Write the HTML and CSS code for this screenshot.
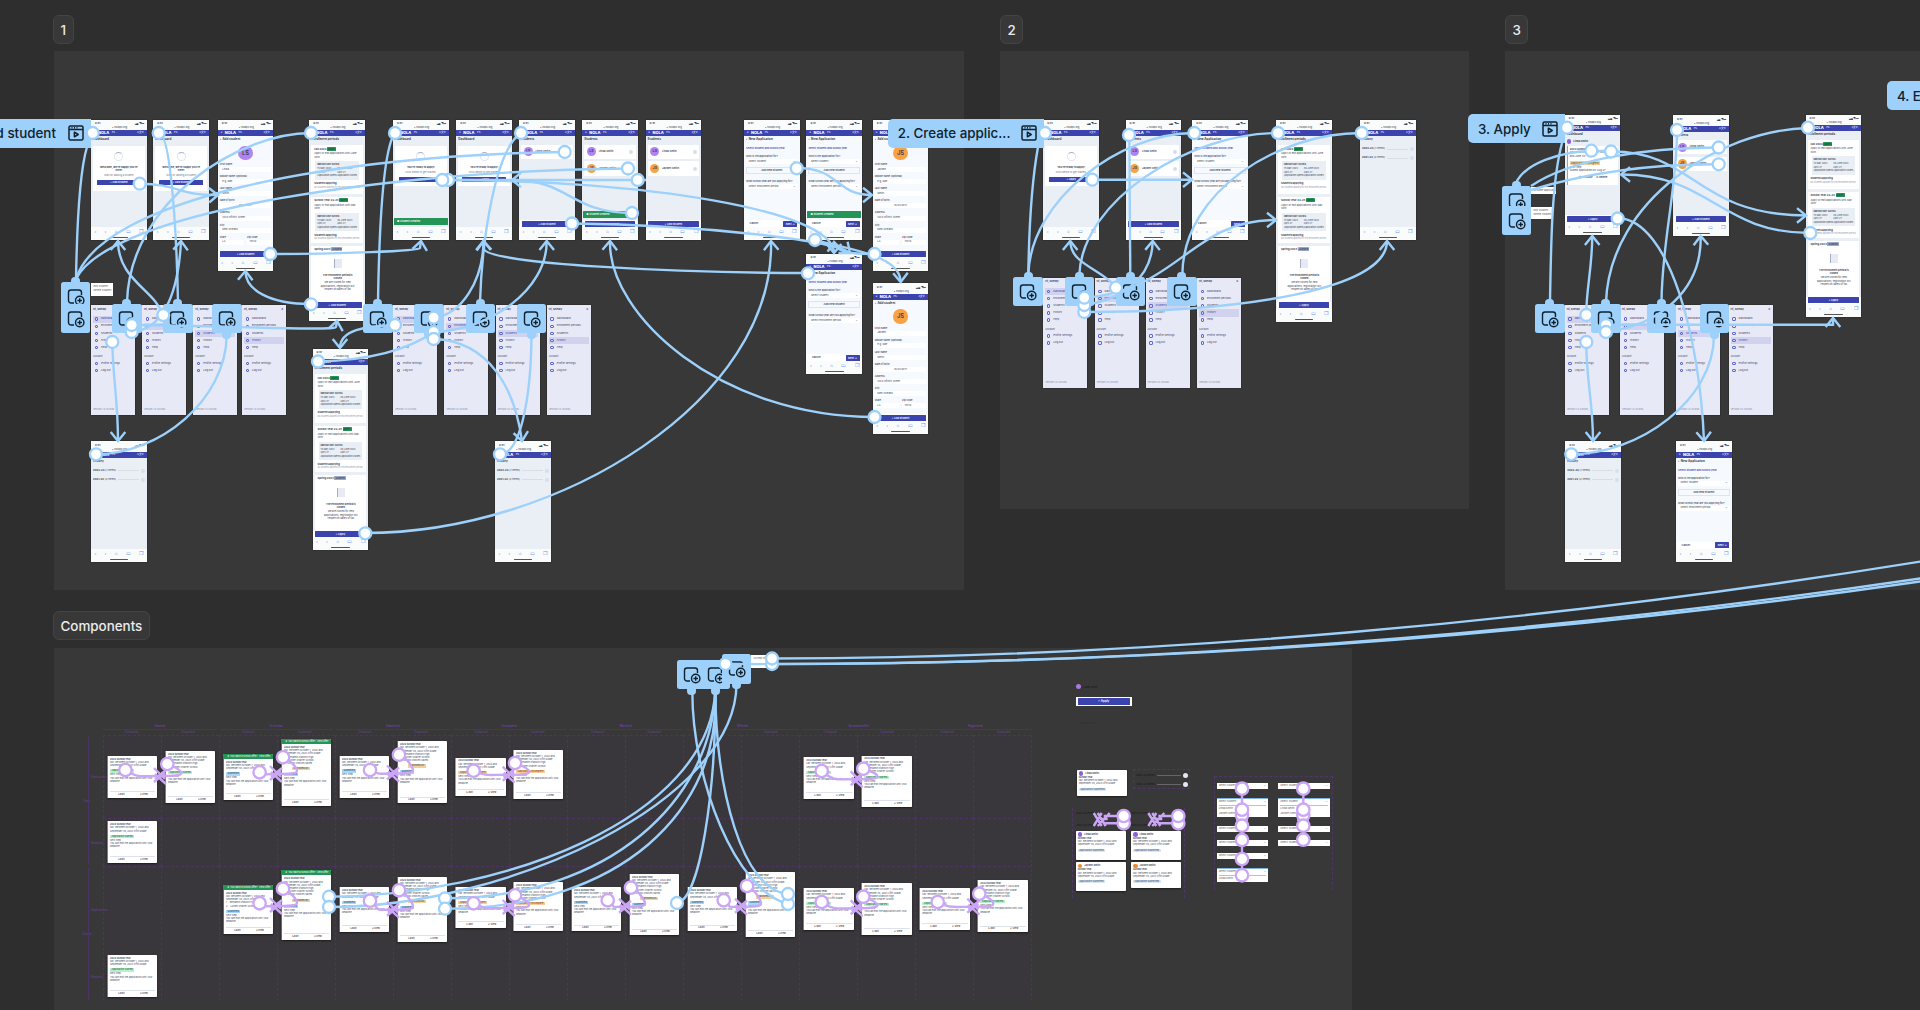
FILE: index.html
```html
<!DOCTYPE html>
<html lang="en">
<head>
  <meta charset="UTF-8">
  <title>Prototype flows</title>
  <link rel="stylesheet" href="styles.css">
</head>
<body>
  <div class="canvas" id="canvas">
    <div class="section section-1"></div>
    <div class="section section-2"></div>
    <div class="section section-3"></div>
    <div class="section section-components"></div>

    <div class="section-name name-1">1</div>
    <div class="section-name name-2">2</div>
    <div class="section-name name-3">3</div>
    <div class="section-name name-components">Components</div>

    <div id="frames"></div>
    <svg class="wires" id="wires" width="1920" height="1010" viewBox="0 0 1920 1010"></svg>
  </div>

  <script src="script.js"></script>
</body>
</html>
```
FILE: styles.css
```css
* {
  box-sizing: border-box;
}
body {
  margin: 0;
  background: #2e2e2e;
  font-family: Inter, "Liberation Sans", sans-serif;
}
.canvas {
  position: relative;
  width: 1920px;
  height: 1010px;
  overflow: hidden;
}

/* sections */
.section {
  position: absolute;
  background: #383838;
}
.section-1 { left: 54px; top: 51px; width: 910px; height: 539px; }
.section-2 { left: 1000px; top: 51px; width: 469px; height: 458px; }
.section-3 { left: 1505px; top: 51px; width: 420px; height: 539px; }
.section-components { left: 54px; top: 648px; width: 1298px; height: 370px; }
.section-name {
  position: absolute;
  height: 29px;
  padding: 0 6.5px;
  border: 1px solid #444;
  border-radius: 6px;
  background: #383838;
  color: #ececec;
  font-size: 13.4px;
  font-weight: 500;
  line-height: 28px;
}
.name-1 { left: 53px; top: 15px; }
.name-2 { left: 1000px; top: 15px; }
.name-3 { left: 1505px; top: 15px; }
.name-components { left: 53px; top: 611px; }

/* phone screens */
.phone {
  position: absolute;
  width: 55.7px;
  display: flex;
  flex-direction: column;
  background: #fafbfb;
  color: #363d50;
  font-size: 2.6px;
  line-height: 3.6px;
  overflow: hidden;
  box-shadow: 0 0 1px #111;
}
.status {
  height: 10.5px;
  padding: 2.6px 2.5px 0 4px;
  display: grid;
  grid-template-columns: 1fr auto;
  font-weight: 700;
}
.status .url {
  grid-column: 1 / 3;
  text-align: center;
  font-weight: 400;
}
.topbar {
  height: 6.2px;
  flex: none;
  padding: 0 3px;
  display: flex;
  align-items: center;
  gap: 2.5px;
  background: #3a43ae;
  color: #fff;
}
.topbar b {
  font-size: 3.9px;
  font-weight: 800;
}
.topbar .lang {
  margin-left: auto;
}
.screen {
  flex: 1;
  padding: 2px 2px 0;
  display: flex;
  flex-direction: column;
  background: #eaeff6;
  min-height: 0;
}
.screen.light {
  background: #f6f9fd;
}
.title {
  height: 4px;
  font-size: 3px;
  font-weight: 700;
}
.tools {
  height: 13px;
  flex: none;
  padding: 2px 3.5px 0;
  display: flex;
  flex-wrap: wrap;
  justify-content: space-between;
  color: #5b93f5;
  font-size: 4.6px;
  line-height: 5px;
}
.tools i {
  width: 100%;
  height: 1px;
  margin: 1.5px 15px 0;
  border-radius: 1px;
  background: #555;
}
.btn {
  height: 5px;
  border-radius: .6px;
  background: #3a43ae;
  color: #fff;
  text-align: center;
  font-weight: 600;
  line-height: 5px;
}
.bottom {
  height: 7px;
  margin: auto -1.5px 0;
  padding: .5px 2px;
  background: #fff;
}
.bottom .btn {
  height: 6px;
  line-height: 6px;
}
.toast {
  height: 6.8px;
  margin: auto -1px 2px;
  padding: 1.5px 3px;
  border-radius: .6px;
  background: #259457;
  color: #fff;
  font-weight: 600;
}
.toast + .bottom {
  margin-top: 0;
}
.hero {
  height: 45px;
  margin-top: 3.5px;
  padding: 6px 4px 0;
  background: #fff;
  text-align: center;
}
.hero .art {
  width: 9px;
  height: 9px;
  margin: 0 auto 5px;
  border: 1px solid #dfe4f1;
  border-top-color: #a9b1cb;
  border-radius: 50%;
}
.hero b, .hero span {
  display: block;
}
.hero span {
  margin: 1.4px 0 2.4px;
  color: #6a7189;
  font-size: 2.5px;
}
.avatar {
  width: 9.4px;
  height: 9.4px;
  border-radius: 50%;
  background: #b084f0;
  text-align: center;
  font-size: 3.6px;
  font-weight: 600;
  line-height: 9.4px;
}
.avatar.orange { background: #f8a245; }
.avatar.big {
  width: 14.4px;
  height: 14.4px;
  flex: none;
  margin: 3.5px auto 0;
  font-size: 5.8px;
  line-height: 14.4px;
}
.person {
  height: 14.4px;
  margin-top: 2.4px;
  padding: 0 2.5px;
  display: flex;
  align-items: center;
  gap: 2.5px;
  background: #fff;
  font-weight: 600;
}
.dot {
  width: 4px;
  height: 4px;
  margin-left: auto;
  border-radius: 50%;
  background: #d6dff0;
}
.label {
  height: 4.1px;
  margin-top: 3px;
  font-size: 2.5px;
  font-weight: 500;
}
.field {
  height: 5px;
  padding: .7px 2.5px;
  display: flex;
  justify-content: space-between;
  background: #fff;
  font-size: 2.6px;
}
.pair {
  display: grid;
  grid-template-columns: 1fr 1fr;
  gap: 3px;
}
.link {
  margin: 5px 0 1px;
  color: #3a43ae;
  font-weight: 600;
}
.ghost {
  height: 6.4px;
  margin: 3.5px 0 3px;
  border: .6px solid #dfe4ee;
  text-align: center;
  font-weight: 600;
  line-height: 5.5px;
}
.bottom.steps {
  display: flex;
  align-items: center;
  justify-content: space-between;
  padding-left: 5px;
  font-weight: 600;
}
.steps .btn { width: 14px; }

/* enrollment periods */
.period {
  height: 48.5px;
  flex: none;
  margin: 3px 0 0;
  padding: 2.5px 2px 0 3px;
  background: #fff;
  font-size: 2.5px;
}
.period.short { height: 46px; }
.period.closed {
  flex: 1;
  text-align: center;
}
.period h4 {
  margin: 0 0 1px;
  font-size: 2.7px;
  text-align: left;
}
.tag {
  padding: 0 1px;
  border-radius: .5px;
  background: #289259;
  color: #1a5534;
}
.closed .tag { background: #9ba8c2; color: #3a435c; }
.dates {
  margin: 2px 2px 2.5px 1px;
  padding: 2px;
  display: grid;
  grid-template-columns: 1fr 1fr;
  background: #eaeff6;
  font-size: 2.3px;
}
.dates b { grid-column: 1 / 3; }
.muted {
  color: #8f97ac;
  font-size: 2.1px;
  white-space: nowrap;
}
.closed .art {
  width: 8px;
  height: 9px;
  margin: 7px auto 6px;
  border-left: 1px solid #a5acc4;
  background: #e7eaf4;
}
.history {
  margin-top: 5px;
  display: flex;
  align-items: center;
  gap: 2px;
  font-size: 2.7px;
}
.history hr {
  flex: 1;
  margin: 0;
  border: 0;
  border-top: .6px solid #d7dce6;
}
.history .dot { margin: 0; }

/* side menus */
.menu {
  position: absolute;
  width: 44px;
  height: 110px;
  padding: 2.5px 2px;
  background: #e8e9f6;
  color: #3b405c;
  font-size: 2.7px;
  line-height: 3.6px;
  box-shadow: 0 0 1px #111;
}
.menu-head {
  height: 8px;
  display: flex;
  justify-content: space-between;
  font-weight: 700;
}
.menu-item {
  height: 7.15px;
  padding: 0 1.6px;
  display: flex;
  align-items: center;
  gap: 3px;
}
.menu-item.on {
  background: #d1d3ee;
  color: #3a43ae;
}
.menu-item i {
  width: 3.4px;
  height: 3.4px;
  border: 1px solid #6169cc;
  border-radius: 1px;
}
.menu small {
  display: block;
  margin: 4px 0 1px;
  font-size: 2.4px;
}
.menu .version {
  margin-top: 34px;
  color: #8289a4;
}

/* application cards */
.card {
  position: absolute;
  width: 50.4px;
  padding: 1.8px 2px;
  display: flex;
  flex-direction: column;
  border-left: 1px solid #3aa567;
  border-radius: .8px;
  background: #fff;
  color: #454b5c;
  font-size: 2.4px;
  line-height: 3.2px;
  overflow: hidden;
  box-shadow: 0 1px 2px #1c1c1c;
}
.card.purple { border-color: #7556b8; }
.card.orange { border-color: #ef8b45; }
.card.plain { border-left: 0; }
.card .banner {
  margin: -1.8px -2px 2px;
  height: 5px;
  padding: 1px 3px;
  flex: none;
  display: flex;
  justify-content: space-between;
  background: #259457;
  color: #fff;
}
.card p { margin: 0; }
.chip {
  align-self: flex-start;
  margin: 2px 0 .8px;
  padding: 0 1.5px;
  border-radius: .5px;
  background: #b9efcd;
  color: #14532d;
}
.purple .chip { background: #a7d8f6; color: #124063; }
.orange .chip { background: #f9cd98; color: #703b0b; }
.plain .chip { background: #d7e7f5; color: #29435c; }
.card footer {
  margin-top: auto;
  padding-top: .8px;
  display: flex;
  justify-content: space-around;
  border-top: .4px solid #dde2ea;
  font-weight: 600;
}
.owner {
  display: flex;
  align-items: center;
  gap: 2px;
  font-weight: 700;
}
.owner i {
  width: 4.6px;
  height: 4.6px;
  border-radius: 50%;
  background: #8c61d3;
}
.owner.second i { background: #ee8a26; }

.note {
  position: absolute;
  padding: 1px 2.5px;
  background: #fff;
  color: #555;
  font-size: 2.6px;
  line-height: 4.8px;
  overflow: hidden;
  white-space: nowrap;
}
.variants {
  position: absolute;
  border: 1px dashed #4f3569;
}
.matrix {
  position: absolute;
  left: 103px;
  top: 735px;
  width: 929px;
  height: 266px;
  display: grid;
  grid-template: 83px 48px 135px / repeat(16, 1fr);
  background: #3a373c;
  border-right: 1px dashed #4b3363;
}
.matrix i {
  border-left: 1px dashed #4b3363;
  border-top: 1px dashed #4b3363;
}
.matrix-head {
  position: absolute;
  left: 103px;
  top: 724px;
  width: 929px;
  display: grid;
  grid-template-columns: repeat(8, 1fr);
  gap: 3px;
  color: #6d3fa0;
  font-size: 2.8px;
  line-height: 4.5px;
  text-align: center;
}
.matrix-head b {
  display: block;
  border-bottom: 1px solid #4e3169;
}
.matrix-head span {
  display: flex;
  justify-content: space-around;
}
.side-label {
  position: absolute;
  color: #6d3fa0;
  font-size: 2.8px;
}
.side-line {
  position: absolute;
  left: 88px;
  width: 2px;
  border: 1px solid #4b3363;
  border-right: 0;
}
.slim-button {
  position: absolute;
  left: 1075.7px;
  top: 697px;
  width: 56px;
  height: 9px;
  padding: 1.2px 2px;
  background: #fff;
  font-size: 3px;
}
.slim-button .btn { height: 6.4px; line-height: 6.4px; }
.dark-row {
  position: absolute;
  display: flex;
  align-items: center;
  gap: 2px;
  width: 52px;
  color: #161616;
  font-size: 2.7px;
}
.dark-row i {
  width: 5px;
  height: 5px;
  border-radius: 50%;
  background: #a878e0;
}
.dark-row hr { flex: 1; margin: 0; border: 0; border-top: 1px solid #666; }
.dark-row hr + i { background: #e3e8f1; }
.select {
  position: absolute;
  width: 51.3px;
  padding: 0 2px;
  background: #fff;
  color: #555;
  font-size: 2.6px;
  line-height: 5.6px;
}
.select.open { border-top: .7px solid #7fb4df; }
.select div:first-child {
  display: flex;
  justify-content: space-between;
}
.select.open div:first-child { border-bottom: .8px solid #9dc9ec; }

/* flow starts and actions */
.flow {
  position: absolute;
  height: 29px;
  padding: 0 7px 0 10px;
  display: flex;
  align-items: center;
  justify-content: space-between;
  border-radius: 5px 0 0 5px;
  background: #9dd1fb;
  color: #10202c;
  font-size: 13.4px;
  font-weight: 500;
  white-space: nowrap;
}
.flow svg {
  flex: none;
}
.flow.cut {
  justify-content: flex-end;
  gap: 12px;
}
.action {
  position: absolute;
  width: 29.3px;
  height: 29.3px;
  border-radius: 2.5px;
  background: #9dd1fb;
}
.action::before {
  content: "";
  position: absolute;
  left: 10.2px;
  top: -4.7px;
  width: 9px;
  height: 9px;
  border-radius: 4px;
  background: #9dd1fb;
}
.action.down::before { top: 25.5px; }
.action.flat::before { display: none; }
.action svg {
  position: absolute;
  left: 0;
  top: 0;
}
.wires {
  position: absolute;
  left: 0;
  top: 0;
  fill: none;
  stroke: #9dd1fb;
  stroke-width: 2.4;
}
.wires circle {
  fill: #fff;
  stroke-width: 2.3;
}
.wires .component {
  stroke: #cba6f7;
}
```
FILE: script.js
```js
const frames = document.getElementById('frames');
const wires = document.getElementById('wires');

function add(cls, x, y, html, extra = '') {
  frames.insertAdjacentHTML('beforeend',
    `<div class="${cls}" style="left:${x}px;top:${y}px;${extra}">${html}</div>`);
}

// ---- phone screens ----
const title = t => `<div class="title">${t}</div>`;
const button = t => `<div class="bottom"><div class="btn">${t}</div></div>`;
const toast = t => `<div class="toast">● ${t}</div>`;
const hero = (big, small, btn) =>
  `<div class="hero"><div class="art"></div><b>${big}</b><span>${small}</span><div class="btn">${btn}</div></div>`;
const person = (ini, name, c = '') =>
  `<div class="person"><div class="avatar ${c}">${ini}</div>${name}<div class="dot"></div></div>`;
const field = (l, v) => `<div><div class="label">${l}</div><div class="field">${v}</div></div>`;
const lina = person('LS', 'Linda Smith');
const jayden = person('JS', 'Jayden Smith', 'orange');

const dates = `<div class="dates"><b>IMPORTANT DATES</b><span>15 May 2023<br>April 27<br>Application opens</span><span>30 June 2023<br>April 27<br>Application closes</span></div>
  <b>Students applying</b><div class="muted">No students applied for this enrollment period</div>`;
const enroll = title('Enrollment periods') +
  `<div class="period"><h4>Fall 2023 <span class="tag">Open</span></h4>Apply or edit applications until June 30th.${dates}</div>
   <div class="period short"><h4>School Year 23-24 <span class="tag">Open</span></h4>Apply or edit applications until May 30th.${dates}</div>
   <div class="period closed"><h4>Spring 2024 <span class="tag">Closed</span></h4><div class="art"></div><b>The enrollment period is<br>closed</b><br>We are closed for new<br>applications, registration will<br>reopen on dates of fall</div>`;

const form = ini => title('‹ &nbsp;Add student') +
  `<div class="avatar big ${ini === 'JS' ? 'orange' : ''}">${ini}</div>` +
  field('First name', ini === 'JS' ? 'Jayden' : 'Linda') + field('Middle name (optional)', 'e.g. Rae') +
  field('Last name', 'Smith') + field('Date of birth', '<span></span>10/21/2017<span></span>') +
  field('Address', '1234 Infinity Street') + field('City', 'New Orleans') +
  `<div class="pair">${field('State', 'LA')}${field('Zip code', '70112')}</div>` + button('+ Add student');

const apply = note => title('‹ &nbsp;New Application') +
  `<div class="link">Select student and school year</div>
   <div class="label">Who is the application for?</div><div class="field">Select student<span>⌄</span></div>
   <div class="ghost">Add new student</div>
   <div class="label">What school year are you applying for?</div><div class="field">Select enrollment period<span>⌄</span></div>` +
  (note ? toast('Student created') : '') +
  '<div class="bottom steps">Cancel<div class="btn">Next →</div></div>';

const row = t => `<div class="history"><span>${t}</span><hr><div class="dot"></div></div>`;

const screens = {
  welcome: title('Dashboard') + hero("Welcome, we're happy you're<br>here!", 'Start by adding a student', '+ Add student'),
  ready: title('Dashboard') + hero("You're ready to apply!", 'Click below to get started.', '+ Apply').replace('class="hero"', 'class="hero" style="height:40px"'),
  formLS: form('LS'),
  formJS: form('JS'),
  enroll: enroll + button('+ Apply'),
  enrollAdd: enroll + button('+ Add student'),
  one: title('Students') + lina + button('+ Add student'),
  two: title('Students') + lina + jayden + button('+ Add student'),
  apply: apply(false),
  applyDone: apply(true),
  history: title('History') + row('<b>2022-23</b> (1 items)') + row('<b>2021-22</b> (2 items)'),
  current: title('Dashboard') +
    `<div class="owner" style="margin:2px 0"><i></i>Linda Smith</div>
     <div style="background:#fff;border-left:1px solid #ef8b45;padding:2px;height:39px"><b>2023 School Year</b><br>Fall: Between October 1, 2022<br>and June 30<br><br><span class="tag" style="background:#f9cd98">Application in progress</span><br>Next step<br>Submit application by Aug 27<div style="margin-top:3px;text-align:center"><b>✎ Resume &nbsp; &nbsp; ✕ Delete</b></div></div>` + button('+ Apply')
};
screens.readyToast = screens.ready + toast('Student created');
screens.twoToast = title('Students') + lina + jayden + toast('Student created') + button('+ Add student');

const phones = [
  [91, 119.5, 120.6, 'welcome'], [153.3, 119.5, 120.6, 'welcome'], [217.7, 119.5, 151.2, 'formLS'],
  [309.3, 119.5, 201.5, 'enrollAdd'], [393, 119.5, 120.6, 'readyToast'], [456.3, 119.5, 120.6, 'ready'],
  [519, 119.5, 120.6, 'one'], [582.3, 119.5, 120.6, 'twoToast'], [645.6, 119.5, 120.6, 'two'],
  [744, 119.5, 120.6, 'apply'], [806.4, 119.5, 120.6, 'applyDone'], [872.7, 119.5, 151.2, 'formJS'],
  [806.4, 253.5, 120.6, 'apply'], [872.7, 283, 151.2, 'formJS'],
  [91, 441.3, 120.6, 'history'], [312.5, 348.5, 201.5, 'enroll'], [495, 441.3, 120.6, 'history'],
  [1043.3, 119.5, 120.6, 'ready'], [1125.6, 119.5, 120.6, 'two'], [1192.3, 119.5, 120.6, 'apply'],
  [1276, 119.5, 202, 'enroll'], [1360, 119.5, 120.6, 'history'],
  [1564.7, 114.5, 120.6, 'current'], [1673, 115, 120.6, 'two'], [1805.5, 114.5, 202, 'enroll'],
  [1565.3, 441.3, 120.6, 'history'], [1676, 441.3, 120.6, 'apply']
];
phones.forEach(([x, y, h, name]) => {
  const light = /form|apply/.test(name) ? ' light' : '';
  add('phone', x, y,
    `<div class="status"><span>9:41</span><span>▂▄ ◥ ▬</span><span class="url">▪ nolaps.org</span></div>
     <div class="topbar">≡<b>NOLA</b>PS...<span class="lang">A文▾</span></div>
     <div class="screen${light}">${screens[name]}</div>
     <div class="tools"><span>‹</span><span>›</span><span>⌂</span><span>▭</span><span>❐</span><i></i></div>`,
    `height:${h}px`);
});

// ---- side menus ----
const items = ['Dashboard', 'Enrollment periods', 'Students', 'History', 'Help'];
const item = (t, on) => `<div class="menu-item${on ? ' on' : ''}"><i></i>${t}</div>`;
[[305, [91, 142, 193.3, 242]], [305, [393, 444.3, 495.6, 546.8]],
 [277.5, [1043.3, 1094.6, 1145.6, 1197]], [305, [1564.7, 1620, 1676, 1728.6]]].forEach(([y, xs]) => {
  xs.forEach((x, n) => add('menu', x, y,
    '<div class="menu-head"><span>Hi, Shelby</span><span>✕</span></div>' +
    items.map((t, i) => item(t, i === n)).join('') +
    '<small>Account</small>' + item('Profile settings') + item('Log out') +
    '<small class="version">Version 1.0 (FF81d)</small>'));
});
add('note', 91, 282.7, 'Edit student<br>Delete student', 'width:22px;height:13px');
add('note', 1531, 187, 'Resume application', 'width:25px;height:7px');
add('note', 1531, 206.5, 'Edit student<br>Delete student', 'width:21.5px;height:12.5px');
add('note', 751, 655, 'Accept offer', 'width:21px;height:13px');

// ---- application cards ----
add('matrix', 103, 735, '<i></i>'.repeat(48));
add('matrix-head', 103, 724,
  ['Started', 'In review', 'Submitted', 'Incomplete', 'Matched', 'Offered', 'Accepted offer', 'Registered'].map(t =>
    `<div><b>${t}</b><span><em>Collapsed</em><em>Expanded</em></span></div>`).join(''));
[[91, 775, 'Applications'], [83, 799, 'Open'], [91, 841, 'Readonly'], [91, 908, 'Applications'], [82, 932, 'Closed'], [91, 975, 'Readonly']]
  .forEach(([x, y, t]) => add('side-label', x, y, t));
add('side-line', 88, 737, '', 'height:127px');
add('side-line', 88, 868, '', 'height:132px');

const G = '', P = 'purple', O = 'orange';
[
  [107, 756, 42, G], [165, 751, 52, G], [223, 753.7, 46.3, P, 1], [281, 739, 66.7, P, 1],
  [339, 756, 42, P], [397, 741.3, 62, P], [455.3, 757.7, 38.3, O], [513, 750, 48.7, O],
  [803.3, 757.3, 41.3, G], [861.3, 755.7, 51.3, G], [107, 821.3, 41.7, G],
  [223, 884.7, 49, P, 1], [281, 870.3, 69.3, P, 1], [339, 887.3, 44.3, P], [397, 877, 64.7, P],
  [455.3, 887.3, 40.7, O], [513, 882.3, 48.4, O], [571, 887.3, 44, P], [629, 874, 61.3, P],
  [687, 887.3, 44, P], [745, 872.3, 64.3, P], [803.3, 888.3, 41.3, G], [861.3, 883.3, 51.3, G],
  [919.3, 888.3, 41.3, G], [977.3, 880.3, 52, G], [107, 955, 41.7, G]
].forEach(([x, y, h, kind, banner]) => {
  const chip = kind === O ? 'Application incomplete' : kind === P ? 'Submitted' : 'Application started';
  const more = h > 47 ? '<p>1. &nbsp; Benjamin Franklin High</p><p>2. &nbsp; Lusher Charter School</p>' : '';
  const long = h > 58 ? '<p>&nbsp; &nbsp; &nbsp;School choices saved</p><div class="chip" style="background:#f9cd98;margin-left:8px">Waitlisted #3</div>' : '';
  add('card ' + kind, x, y,
    (banner ? '<div class="banner"><span>★ You have a school offer!</span><span>View offer</span></div>' : '') +
    `<b>2023 School Year</b><p>Fall: Between October 1, 2022 and</p><p>September 30, 2023 Fifth Grade</p>${more}${long}
     <div class="chip">${chip}</div><p>Next step</p><p>You can edit the application until your</p><p>deadline.</p>
     <footer><span>✎ Edit</span><span>✕ View</span></footer>`,
    `height:${h}px`);
});

const owner = (x, y, h, second) => add('card plain', x, y,
  `<div class="owner ${second ? 'second' : ''}"><i></i>${second ? 'Jayden Smith' : 'Linda Smith'}</div><b>School Year</b>
   <p>Fall: Between October 1, 2022 and</p><p>September 30, 2023 Fifth Grade</p><div class="chip">Application submitted</div>`,
  `height:${h}px`);
owner(1076.7, 769.7, 26.3);
owner(1075.7, 830.7, 29.3);
owner(1131, 830.7, 29.3);
owner(1075.7, 862, 29.3, true);
owner(1131, 862, 26.3, true);

add('dark-row', 1075.7, 684, '<i></i>Linda Smith');
add('slim-button', 1075.7, 697, '<div class="btn">+ Apply</div>');
add('dark-row', 1077, 720.5, '‹ &nbsp;All students', 'color:#27303d');
add('variants', 1133, 769.3, '', 'width:57px;height:20px');
add('variants', 1213.7, 776, '', 'width:119px;height:114px;border-bottom:0');
add('variants', 1072.3, 808, '', 'width:112.6px;height:90px;border-top:0;border-bottom:0');
[775, 784].forEach(y => add('dark-row', 1136, y - 2.5, '2022-23 items<hr><i></i>'));
[813, 825].forEach(y => {
  add('dark-row', 1076, y - 2, '2022-23 items');
  add('dark-row', 1131, y - 2, '2022-23 items');
});
[1216.7, 1278.3].forEach((x, col) => {
  [[783.3, 5.7], [798, 18.7], [826, 5.7], [840.3, 5.7], [853.3, 5.7], [868, 13.7]].slice(0, col ? 4 : 6).forEach(([y, h]) =>
    add('select' + (h > 6 ? ' open' : ''), x, y,
      `<div>Select student<span>⌄</span></div>${h > 6 ? '<div>Linda Smith</div>' : ''}${h > 15 ? '<div>Jayden Smith</div>' : ''}`,
      `height:${h}px`));
});

// ---- flow starts and action blocks ----
const play = `<svg width="16" height="16" viewBox="0 0 16 16" fill="none" stroke="#10202c" stroke-width="1.5">
  <rect x="1" y="1" width="14" height="14" rx="1.5"/><path d="M1 4.4H15M3.5 2.7h1M6 2.7h1M8.5 2.7h1"/><path d="M6.4 7.2v4.6l3.8-2.3z" stroke-linejoin="round"/></svg>`;
add('flow cut', -70, 118.7, `Add student${play}`, 'width:161px');
add('flow', 887.7, 118.7, `2. Create applic...${play}`, 'width:156px');
add('flow', 1468, 114.3, `3. Apply${play}`, 'width:97px');
add('flow', 1887, 81.3, `4. Edit${play}`, 'width:90px');

const plus = `<svg width="29" height="29" viewBox="0 0 29 29" fill="none" stroke="#10202c" stroke-width="1.4">
  <path d="M13 21H10a2.5 2.5 0 0 1-2.5-2.5V10.5A2.5 2.5 0 0 1 10 8h8a2.5 2.5 0 0 1 2.5 2.5V13"/>
  <circle cx="18.700" cy="18.500" r="4.200"/><path d="M18.700 16.200v4.600M16.400 18.500h4.600"/></svg>`;
[
  [61.2, 281.7], [61.2, 304, 'flat'], [112.3, 304], [163.3, 304], [212.3, 304, 'down'],
  [363.3, 304], [414.3, 304, 'down'], [466, 304], [516.8, 304, 'down'],
  [1013.4, 277], [1065, 277], [1116, 277], [1167.3, 277],
  [1501.7, 186], [1501.7, 206, 'flat'], [1535.3, 304], [1591.3, 304], [1647, 304], [1699.8, 304, 'down'],
  [677.3, 660, 'down'], [701, 660, 'down'], [722, 654.3, 'down']
].forEach(([x, y, dir]) => add('action ' + (dir || ''), x, y, plus));

// ---- connectors ----
let svg = `<defs>
  <marker id="tip" overflow="visible" markerUnits="userSpaceOnUse" orient="auto"><path d="M-9 -7.3L0 0L-9 7.3" stroke="#9dd1fb" stroke-width="2.400"/></marker>
</defs>`;

// wires without an arrow end in a handle or an action block
[
  'M87 147C80 170 77 220 76 280', 'M76 279C100 200 330 155 565 152', 'M76 279C110 210 400 170 628 168.500',
  'M127 302C130 200 240 133 311 133', 'M158.700 133C172 133 177 250 178 302',
  'M318 361.500C380 360 415 345 433.700 332', 'M226.700 335C226 400 160 454 96 454.300',
  'M395 133C382 150 379 240 378 302', 'M521 133C495 150 482 240 480 302', 'M531.500 335C531 400 520 454 500 454.300',
  'M448 180H646',
  'M1038 147C1032 180 1029 230 1028.300 275', 'M1028.300 275C1030 200 1120 133 1194 133',
  'M1079.300 275C1082 200 1190 133 1278 133', 'M1182.300 275C1183 190 1280 133 1361 133', 'M1129.300 135L1130.300 275',
  'M1516 183C1525 163 1560 152 1591 151H1611', 'M1531 186C1570 160 1640 148 1719 147.500',
  'M1531 190C1580 175 1640 164 1719 164.300', 'M1562 143C1552 180 1551 240 1550 302',
  'M1677 130C1677 190 1662 240 1661.500 302', 'M1606 302C1610 200 1720 130 1808 128', 'M1714 335C1714 400 1640 454 1571 454.300',
  'M772 658.500C1150 658 1550 622 1930 560', 'M772 664C1170 664 1560 632 1930 577', 'M725 664C1150 666 1560 634 1930 580',
  'M692.300 690C692 780 735 890 788 904', 'M715.300 690C716 790 742 890 788 894', 'M715.300 690C716 790 700 900 677 903',
  'M715.300 690C710 820 500 896 329 896.700', 'M736.500 684C736 800 510 907 329 907',
  'M715.300 690C712 800 610 898 445 898.300', 'M715.300 690C722 810 620 909 445 908.700'
].forEach(d => svg += `<path d="${d}"/>`);

[
  'M139.700 183.700C178 184 180 196 218 195', 'M270 254C340 254 419 251 420 248L421 241', 'M311 304C270 304 245 290 245.500 271',
  'M163 315C155 290 118 280 118 241', 'M131.700 332C160 330 178 300 181 241', 'M131.700 325C230 326 336 331 336 327L337 321',
  'M395 325C365 326 340 330 340 348', 'M112.300 342C113 380 118 400 118 441', 'M433.700 317.700C462 315 483 280 483.500 241',
  'M433.700 332C490 330 547 290 546.700 241', 'M434 339C490 341 515 390 522 441', 'M808 273C680 273 488 264 484 249L483.500 241',
  'M632 213C570 213 570 180 512 180', 'M448 180C640 180 834 210 834 253', 'M572 223.500C700 225 834 240 850 253',
  'M815 240C850 250 900 255 900.700 282', 'M874 254C850 254 835 252 834 242', 'M796.700 168C840 168 835 195 872 195',
  'M874.500 417C720 417 608 315 610 241', 'M365 533C560 533 775 400 771 241',
  'M1092 179.700H1192', 'M1116 287.700C1105 270 1070 265 1070.300 241', 'M1084 305C1120 300 1152 280 1152.700 241',
  'M1084 298C1180 290 1190 220 1276 220', 'M1084 312C1240 312 1387 290 1387 241',
  'M1611 151.500C1695 151 1695 215 1806 215.500', 'M1810 233C1720 233 1710 174 1621 174.500',
  'M1618 218C1670 220 1700 340 1704 441', 'M1586.300 315C1586 290 1592 270 1592.300 236', 'M1606 324.700H1833V318',
  'M1606 332C1660 325 1702 290 1700.700 236', 'M1586.300 342C1586 380 1593 400 1593 441'
].forEach(d => svg += `<path d="${d}" marker-end="url(#tip)"/>`);

[
  [92.7, 133], [158.7, 133], [139.7, 183.7], [311, 133], [270.3, 254], [311, 304.3], [395, 133], [448, 180], [442.3, 180],
  [521, 133], [564.7, 152], [628, 168.5], [637.7, 180], [632, 213], [572, 223.5], [796.7, 168.3], [815, 240],
  [874.5, 254], [808, 273.3], [874.5, 417], [163.3, 315], [131.7, 332], [131.7, 325], [112.3, 342], [395, 325],
  [433.7, 332], [433.7, 317.7], [433.7, 339], [318, 361.5], [96, 454.3], [365.3, 533.3], [500, 454.3],
  [1045, 133], [1092.3, 179.7], [1129, 135], [1194.3, 133], [1278, 133], [1361.7, 133], [1116, 287.7],
  [1084.3, 312], [1084.3, 305], [1084.3, 297.7],
  [1567, 127.7], [1591.3, 150.7], [1611, 151.5], [1677, 130], [1718.7, 147.5], [1718.7, 164.3], [1808, 127.7],
  [1810.3, 233], [1617.7, 218.5], [1586.3, 315], [1606, 325], [1606, 332], [1586.3, 342], [1571.3, 454.3],
  [725.5, 664], [772, 664], [772, 658.5]
].forEach(([x, y]) => svg += `<circle cx="${x}" cy="${y}" r="6"/>`);

// component interactions: collapsed card <-> expanded card
const star = (x, y) => `<path d="M${x - 6} ${y - 8}L${x + 5} ${y + 3}M${x - 6} ${y + 6}L${x + 5} ${y - 3}M${x + 6} ${y - 6}L${x - 5} ${y + 3}M${x + 6} ${y + 8}L${x - 5} ${y - 2}"/>`;
const knob = (x, y) => `<circle cx="${x}" cy="${y}" r="6.200"/>`;
svg += '<g class="component">';
[
  [125.4, 770, 167.3, 764, 160, 776], [259.6, 772.3, 283, 757.3, 276, 774], [370, 770, 399, 754.7, 393, 773.5],
  [473.6, 770.7, 515, 763, 508.7, 774.7], [821.7, 771, 863.3, 768.7, 856.7, 779.3],
  [259.6, 903.3, 283, 888.7, 276, 906], [370, 900.7, 399, 890.3, 393, 909.7], [473.6, 903.3, 515, 895.3, 508.7, 908],
  [607.7, 900.3, 631, 887.7, 625, 906.7], [723.7, 900.3, 747, 886, 741, 906.7],
  [821.7, 902, 863.3, 896.7, 856.7, 908.3], [937.7, 902, 979.3, 893.7, 973.3, 906.7]
].forEach(([x1, y1, x2, y2, sx, sy]) => {
  svg += `<path d="M${x1} ${y1}C${x1 + 12} ${sy + 2} ${sx - 20} ${sy} ${sx} ${sy}"/>
    <path d="M${x2} ${y2}C${x2 + 8} ${y2 + 3} ${x2 + 14} ${sy - 6} ${x2 + 14} ${sy - 3}S${sx + 12} ${sy} ${sx} ${sy}"/>` +
    star(sx, sy) + knob(x1, y1) + knob(x2, y2);
});
[1123.7, 1178.3].forEach(x => {
  svg += `<path d="M${x} 816H${x - 20}M${x} 823.300H${x - 20}M${x - 30} 813l8 13M${x - 22} 813l-8 13M${x - 26} 813l8 13M${x - 14} 813l-12 13M${x - 24} 819h8"/>` +
    knob(x, 823.3) + knob(x, 816);
});
svg += '<path d="M1242 789V875M1303.300 789V840M1236 784h12M1236 820h12M1297 784h12M1297 820h12"/>';
[788.7, 815, 825.7, 809.7, 840, 859, 875.3].forEach(y => svg += knob(1242, y));
[788.7, 815, 825.7, 809.7, 839.7].forEach(y => svg += knob(1303.3, y));
svg += '</g>';

// handles on the expanded cards
[[329, 896.7], [329, 907], [445, 898.3], [445, 908.7], [677, 903], [788, 904], [788, 894]]
  .forEach(([x, y]) => svg += `<circle cx="${x}" cy="${y}" r="6"/>`);

wires.innerHTML = svg;
```
